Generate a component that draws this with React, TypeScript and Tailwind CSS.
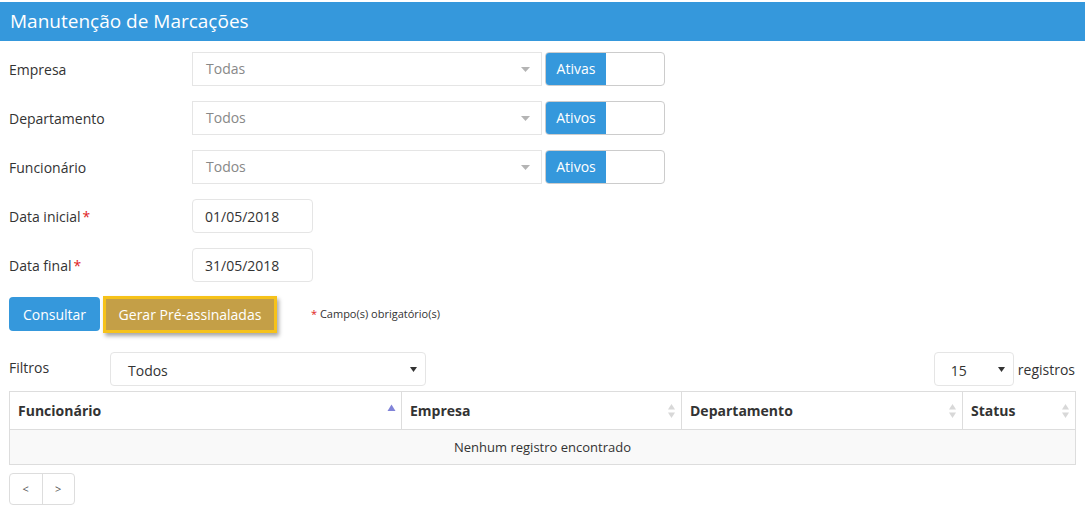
const selectRows = [
  { label: "Empresa", value: "Todas", toggle: "Ativas" },
  { label: "Departamento", value: "Todos", toggle: "Ativos" },
  { label: "Funcionário", value: "Todos", toggle: "Ativos" },
];

const dateRows = [
  { label: "Data inicial", value: "01/05/2018" },
  { label: "Data final", value: "31/05/2018" },
];

const columns = [
  { name: "Funcionário", w: "w-[392px]", active: true },
  { name: "Empresa", w: "w-[280px]", active: false },
  { name: "Departamento", w: "w-[281px]", active: false },
  { name: "Status", w: "flex-1", active: false },
];

const SortIcon = ({ active }: { active: boolean }) =>
  active ? (
    <svg width="9" height="8" viewBox="0 0 9 8" className="mb-[6px]">
      <path d="M4.5 0.5 L8.5 7 L0.5 7 Z" fill="#8083d8" />
    </svg>
  ) : (
    <svg width="9" height="16" viewBox="0 0 9 16">
      <path d="M4.5 1 L8 6.5 L1 6.5 Z" fill="#d8d8d8" />
      <path d="M4.5 15 L8 9.5 L1 9.5 Z" fill="#d8d8d8" />
    </svg>
  );

const Caret = () => (
  <svg width="7" height="5" viewBox="0 0 7 5">
    <path d="M0 0 L7 0 L3.5 5 Z" fill="#333" />
  </svg>
);

export default function App() {
  return (
    <div className="min-h-[513px] w-[1085px] bg-white pt-[2px] font-['Open_Sans',sans-serif] text-[14px] text-[#333]">
      <div className="flex h-[39px] items-center bg-[#3598dc] px-[10px] text-[19px] text-white">
        Manutenção de Marcações
      </div>

      <div className="flex flex-col gap-[15px] px-[9px] pt-[11px]">
        {selectRows.map((r) => (
          <div key={r.label} className="flex h-[34px] items-center">
            <div className="w-[183px]">{r.label}</div>
            <div className="flex h-[34px] w-[350px] items-center justify-between border border-[#e5e5e5] pl-[13px] pr-[11px] text-[#888]">
              <span className="-translate-y-[1px]">{r.value}</span>
              <svg width="9" height="5" viewBox="0 0 9 5">
                <path d="M0 0 L9 0 L4.5 5 Z" fill="#b4b4b4" />
              </svg>
            </div>
            <div className="ml-[3px] flex h-[34px] w-[120px] overflow-hidden rounded-[4px] border border-[#cccccc]">
              <div className="flex w-[60px] items-center justify-center bg-[#3598dc] text-[14px] text-white">
                <span className="-translate-y-[1px]">{r.toggle}</span>
              </div>
            </div>
          </div>
        ))}

        {dateRows.map((r) => (
          <div key={r.label} className="flex h-[34px] items-center">
            <div className="w-[183px]">
              {r.label}
              <span className="ml-[2px] text-[#e02222]">*</span>
            </div>
            <div className="flex h-[34px] w-[121px] items-center rounded-[4px] border border-[#e5e5e5] pl-[12px]">
              {r.value}
            </div>
          </div>
        ))}

        <div className="flex h-[34px] items-center">
          <button className="h-[34px] w-[91px] rounded-[4px] bg-[#3598dc] text-[14px] text-white">
            Consultar
          </button>
          <button className="ml-[3px] h-[37px] w-[174px] border-[3px] border-[#f6c21a] bg-[#c49f47] text-[14px] text-white shadow-[2px_3px_4px_rgba(0,0,0,0.35)]">
            Gerar Pré-assinaladas
          </button>
          <span className="ml-[34px] text-[11px]">
            <span className="text-[#e02222]">*</span> Campo(s) obrigatório(s)
          </span>
        </div>
      </div>

      <div className="mt-[21px] px-[9px]">
        <div className="flex h-[34px] items-center">
          <div className="w-[101px] -translate-y-[2px]">Filtros</div>
          <div className="flex h-[34px] w-[316px] items-center justify-between rounded-[4px] border border-[#e5e5e5] pl-[17px] pr-[8px]">
            <span className="translate-y-[1px]">Todos</span>
            <Caret />
          </div>
          <div className="flex-1" />
          <div className="flex h-[34px] w-[80px] items-center justify-between rounded-[4px] border border-[#e5e5e5] pl-[16px] pr-[8px]">
            <span className="translate-y-[1px]">15</span>
            <Caret />
          </div>
          <span className="ml-[4px] mr-[1px]">registros</span>
        </div>

        <div className="mt-[5px] w-[1067px] border border-[#dddddd]">
          <div className="flex h-[38px] border-b border-[#dddddd]">
            {columns.map((c, i) => (
              <div
                key={c.name}
                className={`flex items-center justify-between pl-[8px] pr-[5px] font-bold ${c.w} ${
                  i < columns.length - 1 ? "border-r border-[#dddddd]" : ""
                }`}
              >
                <span>{c.name}</span>
                <SortIcon active={c.active} />
              </div>
            ))}
          </div>
          <div className="flex h-[34px] items-center justify-center bg-[#f9f9f9] text-[13px]">
            <span className="translate-y-[1px]">Nenhum registro encontrado</span>
          </div>
        </div>

        <div className="mt-[8px] flex h-[32px] w-[66px] rounded-[4px] border border-[#dddddd] text-[11px] text-[#555]">
          <div className="flex flex-1 items-center justify-center border-r border-[#dddddd]">
            &lt;
          </div>
          <div className="flex flex-1 items-center justify-center">&gt;</div>
        </div>
      </div>
    </div>
  );
}
